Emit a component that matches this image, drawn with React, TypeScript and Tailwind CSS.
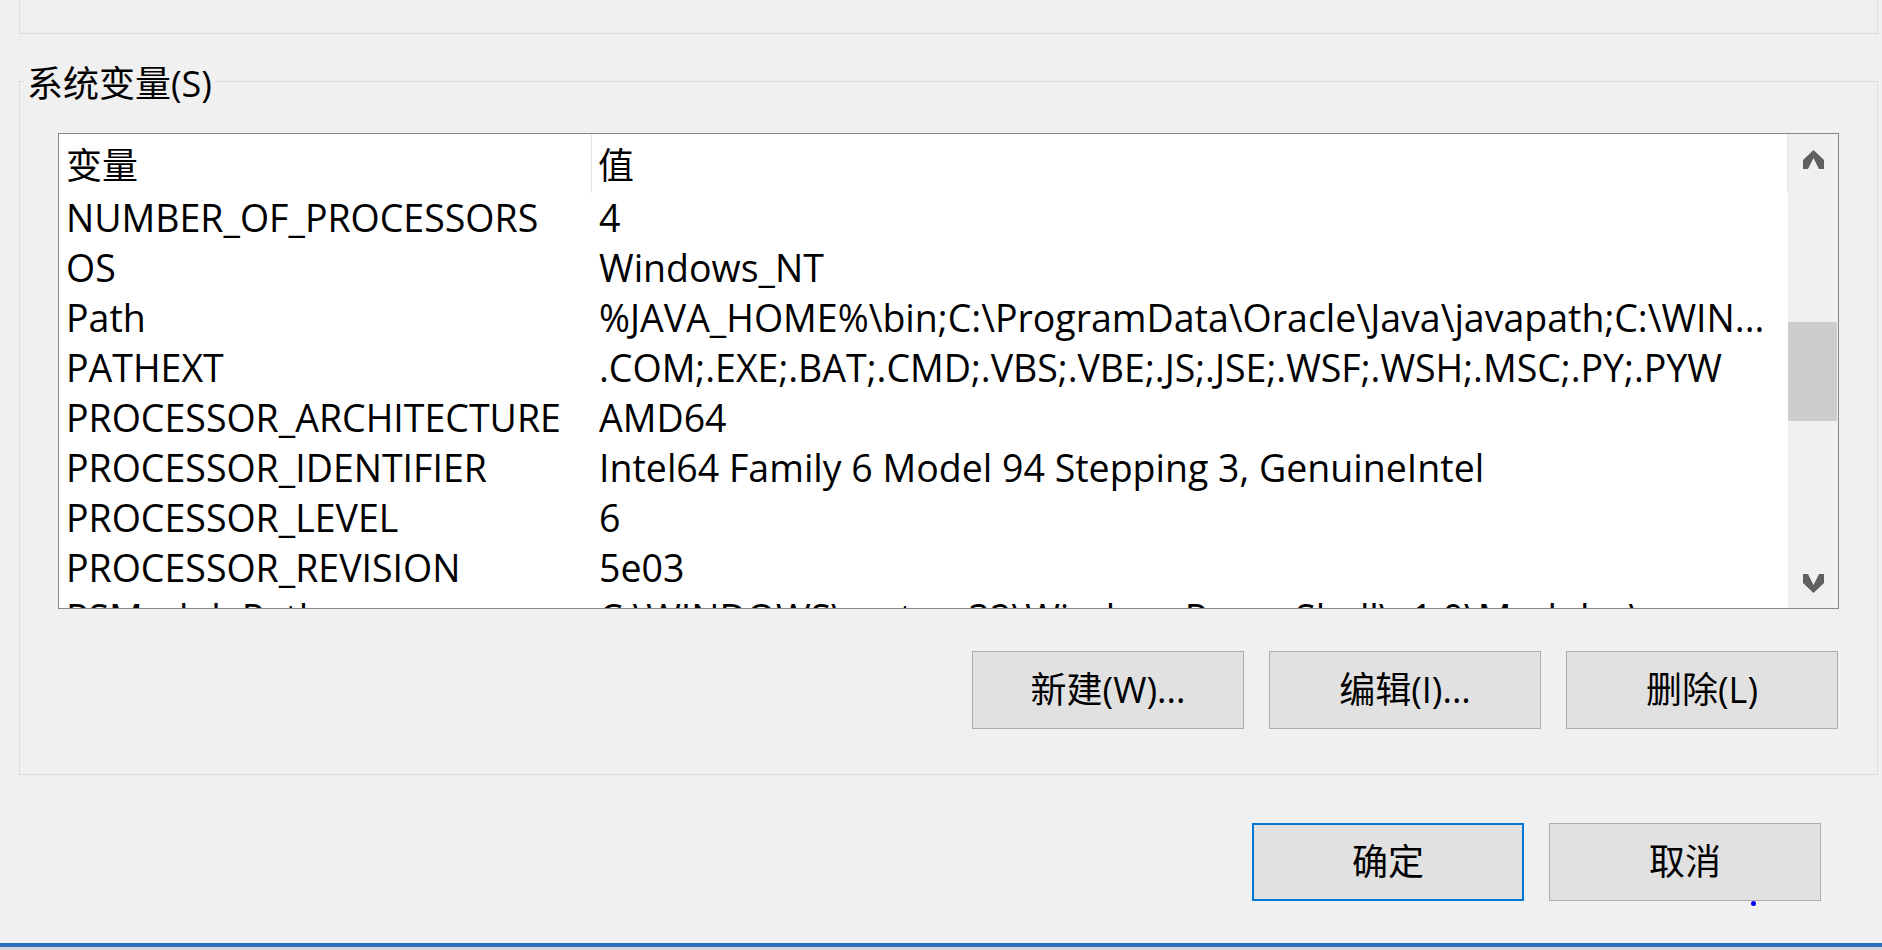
import React from "react";

const FONT = {
  fontFamily: '"Open Sans", "Noto Sans CJK SC", sans-serif',
};

const ROWS: [string, string][] = [
  ["NUMBER_OF_PROCESSORS", "4"],
  ["OS", "Windows_NT"],
  ["Path", "%JAVA_HOME%\\bin;C:\\ProgramData\\Oracle\\Java\\javapath;C:\\WIN..."],
  ["PATHEXT", ".COM;.EXE;.BAT;.CMD;.VBS;.VBE;.JS;.JSE;.WSF;.WSH;.MSC;.PY;.PYW"],
  ["PROCESSOR_ARCHITECTURE", "AMD64"],
  ["PROCESSOR_IDENTIFIER", "Intel64 Family 6 Model 94 Stepping 3, GenuineIntel"],
  ["PROCESSOR_LEVEL", "6"],
  ["PROCESSOR_REVISION", "5e03"],
  ["PSModulePath", "C:\\WINDOWS\\system32\\WindowsPowerShell\\v1.0\\Modules\\"],
];

// solid scroll arrow, same shape as the win10 one
function Chevron({ up }: { up?: boolean }) {
  return (
    <svg width="21" height="19" viewBox="0 0 21 19">
      <polygon
        points={
          up
            ? "10.5,0 21,10 21,19 16,19 10.5,8 5,19 0,19 0,10"
            : "10.5,19 21,9 21,0 16,0 10.5,11 5,0 0,0 0,9"
        }
        fill="#606060"
      />
    </svg>
  );
}

function WinButton({ label, focused }: { label: string; focused?: boolean }) {
  return (
    <button
      className={`flex h-[78px] w-[272px] items-center justify-center bg-[#e1e1e1] text-[36px] leading-none text-black ${
        focused ? "border-2 border-[#0078d7]" : "border border-[#adadad]"
      }`}
    >
      {label}
    </button>
  );
}

export default function App() {
  return (
    <div className="flex h-[950px] w-[1882px] flex-col overflow-hidden bg-[#f0f0f0] text-black" style={FONT}>
      {/* bottom of the user variables group, scrolled off the top */}
      <div className="ml-[19px] h-[34px] w-[1859px] border-x border-b border-[#dcdcdc]" />

      {/* system variables group */}
      <div className="relative ml-[19px] mt-[47px] flex h-[694px] w-[1859px] flex-col border border-[#dcdcdc]">
        <span className="absolute -top-[18px] left-[4px] bg-[#f0f0f0] px-[3px] text-[36px] leading-[40px]">
          系统变量(S)
        </span>

        <div className="ml-[38px] mt-[51px] flex h-[476px] w-[1781px] border border-[#828790] bg-white">
          <div className="flex min-w-0 flex-1 flex-col overflow-hidden">
            <div className="flex h-[59px] shrink-0 text-[36px] leading-none">
              <div className="flex w-[533px] items-center border-r border-[#e5e5e5] pl-[7px] pt-[4px]">变量</div>
              <div className="flex flex-1 items-center border-r border-[#e5e5e5] pl-[6px] pt-[4px]">值</div>
            </div>
            {ROWS.map(([name, value]) => (
              <div key={name} className="flex h-[50px] shrink-0 text-[37.5px] leading-[50px]">
                <div className="w-[533px] shrink-0 whitespace-nowrap pl-[7px]">{name}</div>
                <div className="min-w-0 flex-1 overflow-hidden whitespace-nowrap pl-[7px]">{value}</div>
              </div>
            ))}
          </div>

          <div className="flex w-[50px] shrink-0 flex-col bg-[#f0f0f0]">
            <div className="flex h-[50px] items-center justify-center">
              <Chevron up />
            </div>
            <div className="flex-1">
              <div className="mt-[138px] h-[99px] w-[49px] bg-[#cdcdcd]" />
            </div>
            <div className="flex h-[50px] items-center justify-center">
              <Chevron />
            </div>
          </div>
        </div>

        <div className="mt-[42px] flex w-[1818px] justify-end gap-[25px]">
          <WinButton label="新建(W)..." />
          <WinButton label="编辑(I)..." />
          <WinButton label="删除(L)" />
        </div>
      </div>

      {/* dialog buttons */}
      <div className="mt-[48px] flex justify-end gap-[25px] pr-[61px]">
        <WinButton label="确定" focused />
        <div className="relative">
          <WinButton label="取消" />
          <span className="absolute -bottom-[5px] left-[202px] h-[5px] w-[5px] rounded-full bg-[#0000ff]" />
        </div>
      </div>

      <div className="mt-auto h-[4px] bg-[#2f6dc0]" />
      <div className="h-[3px] bg-[#d4d4d4]" />
    </div>
  );
}
